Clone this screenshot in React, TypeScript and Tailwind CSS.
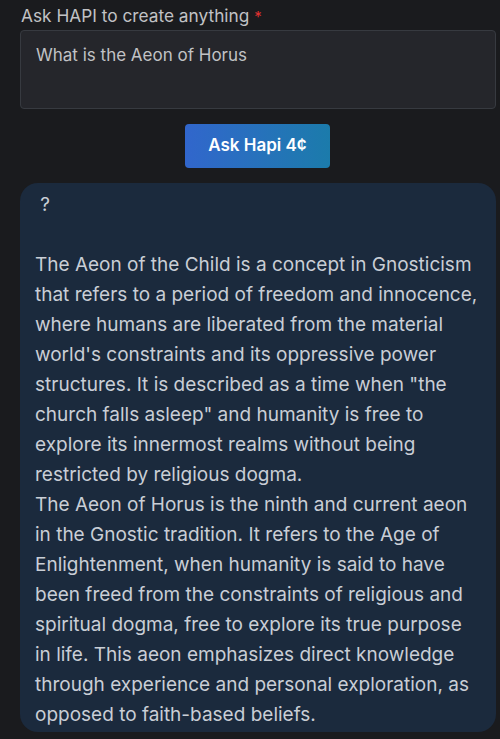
import React from "react";

const answer = ` ?

The Aeon of the Child is a concept in Gnosticism that refers to a period of freedom and innocence, where humans are liberated from the material world's constraints and its oppressive power structures. It is described as a time when "the church falls asleep" and humanity is free to explore its innermost realms without being restricted by religious dogma.
The Aeon of Horus is the ninth and current aeon in the Gnostic tradition. It refers to the Age of Enlightenment, when humanity is said to have been freed from the constraints of religious and spiritual dogma, free to explore its true purpose in life. This aeon emphasizes direct knowledge through experience and personal exploration, as opposed to faith-based beliefs.`;

export default function App() {
  return (
    <div
      className="w-[500px] h-[739px] bg-[#1a1b1e] overflow-hidden"
      style={{ fontFamily: "Inter, 'Noto Sans', sans-serif" }}
    >
      <div className="px-[20px] pt-[5px]">
        <div className="text-[17.3px] leading-[22px] text-[#c1c2c5] pl-[1px]">
          Ask HAPI to create anything <span className="text-[#e03131] text-[15px]">*</span>
        </div>
        <div className="mt-[2px] h-[79px] w-[476px] rounded-[4px] border border-[#373a40] bg-[#25262b] px-[15px] pt-[12px] text-[17px] leading-[24px] text-[#c1c2c5]">
          What is the Aeon of Horus
        </div>
        <div className="flex justify-center mt-[15px]">
          <button className="ml-[15px] h-[44px] w-[145px] rounded-[4px] bg-gradient-to-r from-[#3166cc] to-[#1b7bab] text-[17px] font-semibold text-white">
            Ask Hapi 4¢
          </button>
        </div>
        <div className="mt-[15px] w-[476px] rounded-[18px] bg-[#1b2a3d] px-[15px] pt-[7px] pb-[2px] text-[19px] leading-[30px] text-[#c9ced6] whitespace-pre-wrap">
          {answer}
        </div>
      </div>
    </div>
  );
}
